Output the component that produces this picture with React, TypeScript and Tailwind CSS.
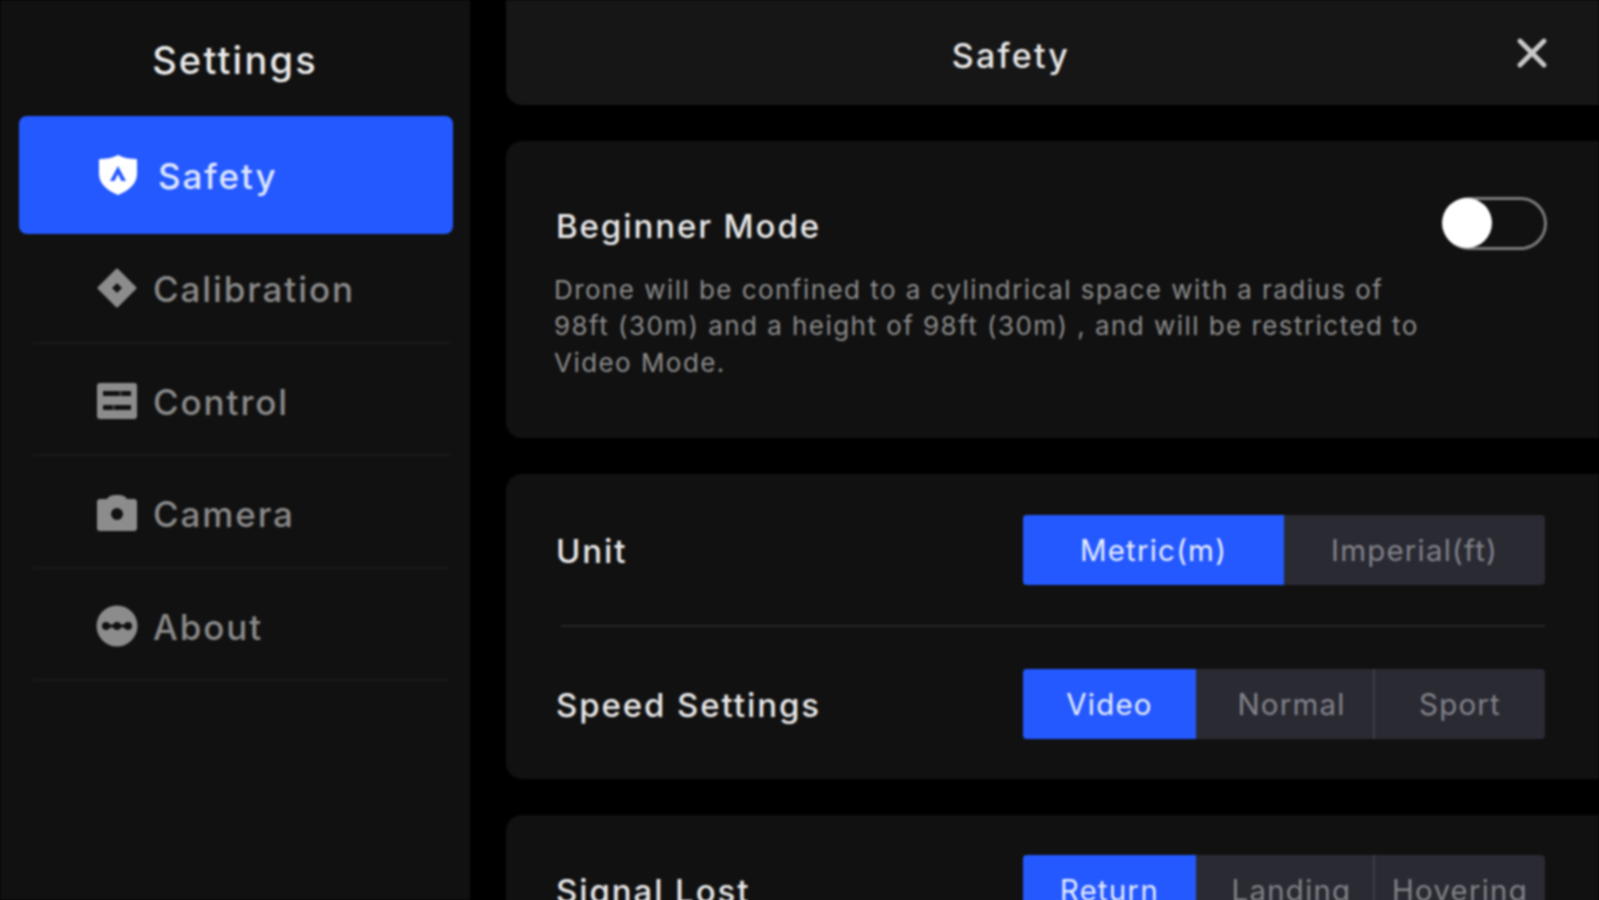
import { ReactNode } from 'react'
import { X } from 'lucide-react'

const ShieldIcon = () => (
  <svg width="40" height="42" viewBox="0 0 40 42" className="shrink-0">
    <path
      fill="#fff"
      fillRule="evenodd"
      d="M20 1 C26 4 32 5 38 5 C39 5 39 6 39 7 L39 20 C39 30 30 37 20 41 C10 37 1 30 1 20 L1 7 C1 6 1 5 2 5 C8 5 14 4 20 1 Z M20 12 L12 27 L16.5 27 L20 20 L23.5 27 L28 27 Z"
    />
  </svg>
)

const DiamondIcon = () => (
  <svg width="42" height="42" viewBox="0 0 42 42" className="shrink-0">
    <path
      fill="#8c8c8c"
      fillRule="evenodd"
      stroke="#8c8c8c"
      strokeWidth="3"
      strokeLinejoin="round"
      d="M21 3 L39 21 L21 39 L3 21 Z M21 14 L14 21 L21 28 L28 21 Z"
    />
  </svg>
)

const ControlIcon = () => (
  <svg width="40" height="36" viewBox="0 0 40 36" className="shrink-0">
    <rect width="40" height="36" rx="3" fill="#8c8c8c" />
    <rect x="6" y="8" width="28" height="5" fill="#111" />
    <rect x="6" y="22" width="28" height="5" fill="#111" />
    <rect x="22" y="7" width="3" height="7" fill="#8c8c8c" opacity="0.3" />
    <rect x="15" y="21" width="3" height="7" fill="#8c8c8c" opacity="0.3" />
  </svg>
)

const CameraIcon = () => (
  <svg width="40" height="36" viewBox="0 0 40 36" className="shrink-0">
    <path
      fill="#8c8c8c"
      fillRule="evenodd"
      d="M3 4 L10 4 C12 1 14 0 20 0 C26 0 28 1 30 4 L37 4 C39 4 40 5 40 7 L40 33 C40 35 39 36 37 36 L3 36 C1 36 0 35 0 33 L0 7 C0 5 1 4 3 4 Z M20 13 A6 6 0 1 0 20 25 A6 6 0 1 0 20 13 Z"
    />
  </svg>
)

const AboutIcon = () => (
  <svg width="42" height="42" viewBox="0 0 42 42" className="shrink-0">
    <circle cx="21" cy="21" r="20.5" fill="#8c8c8c" />
    <circle cx="10" cy="21" r="4" fill="#111" />
    <circle cx="21" cy="21" r="4" fill="#111" />
    <circle cx="32" cy="21" r="4" fill="#111" />
    <rect x="10" y="19.5" width="22" height="3" fill="#111" />
  </svg>
)

const NAV = [
  { label: 'Calibration', icon: <DiamondIcon /> },
  { label: 'Control', icon: <ControlIcon /> },
  { label: 'Camera', icon: <CameraIcon /> },
  { label: 'About', icon: <AboutIcon /> },
]

function Segmented({ options }: { options: { label: string; w: string }[] }) {
  return (
    <div className="flex h-[70px] w-[522px] shrink-0 overflow-hidden rounded-[4px] bg-[#2a2a33] text-[29.5px] tracking-[1.2px]">
      {options.map((o, i) => (
        <div
          key={o.label}
          className={`flex items-center justify-center ${o.w} ${
            i === 0 ? 'bg-[#2459ff] text-[#e8eeff]' : 'text-[#83838a]'
          } ${i === 2 ? 'border-l-2 border-[#3d3d44]' : ''}`}
        >
          {o.label}
        </div>
      ))}
    </div>
  )
}

function Row({ label, children }: { label: string; children: ReactNode }) {
  return (
    <div className="flex items-center justify-between">
      <span className="pt-[3px] text-[33px] font-medium tracking-[1.9px] text-[#e8e8e8]">{label}</span>
      {children}
    </div>
  )
}

export default function App() {
  return (
    <div className="h-screen w-full overflow-hidden bg-black">
      <div
        className="flex h-full w-full bg-black blur-[1px]"
        style={{ fontFamily: 'Inter, "Noto Sans", sans-serif' }}
      >
        {/* Sidebar */}
        <div className="w-[470px] shrink-0 bg-[#111111]">
          <div className="flex h-[116px] items-center justify-center pt-[4px] text-[38px] font-medium tracking-[2.2px] text-[#eaeaea]">
            Settings
          </div>
          <div className="relative -mb-[3px] ml-[19px] mr-[17px] flex h-[118px] items-center gap-[20px] rounded-[8px] bg-[#2459ff] pl-[79px] text-[35px] font-medium tracking-[1.9px] text-[#dfe7ff]">
            <ShieldIcon />
            <span className="pt-[2px]">Safety</span>
          </div>
          {NAV.map((n) => (
            <div
              key={n.label}
              className="ml-[33px] mr-[20px] flex h-[112.5px] items-center border-b-2 border-[#191919] pl-[63px] pt-[4px] text-[35px] font-medium tracking-[1.9px] text-[#8a8a8a]"
            >
              <div className="flex w-[42px] shrink-0 justify-center">{n.icon}</div>
              <span className="ml-[15px] pt-[2px]">{n.label}</span>
            </div>
          ))}
        </div>

        {/* Main */}
        <div className="ml-[36px] flex min-w-0 flex-1 flex-col gap-[36px]">
          <div className="flex h-[105px] shrink-0 items-center rounded-bl-[16px] bg-[#161616]">
            <div className="w-[1010px] pt-[5px] text-center text-[34px] font-medium tracking-[2.2px] text-[#e8e8e8]">Safety</div>
            <X className="-ml-[8px] text-[#c8c8c8]" size={48} strokeWidth={2.4} />
          </div>

          <div className="h-[297px] shrink-0 rounded-l-[16px] bg-[#111111] pl-[50px] pr-[52px] pt-[56px]">
            <div className="flex items-start justify-between">
              <span className="mt-[5px] text-[33px] font-medium tracking-[1.9px] text-[#e8e8e8]">Beginner Mode</span>
              <div className="relative h-[53px] w-[104px] rounded-full border-[3px] border-[#7a7a7a]">
                <div className="absolute -left-[4px] -top-[2px] h-[50px] w-[50px] rounded-full bg-white" />
              </div>
            </div>
            <p className="-ml-[2px] mt-[20px] w-[875px] text-[26px] leading-[36.7px] tracking-[1.45px] text-[#8c8c8c]">
              Drone will be confined to a cylindrical space with a radius of 98ft (30m) and a height of 98ft (30m) , and will be restricted to Video Mode.
            </p>
          </div>

          <div className="h-[305px] shrink-0 rounded-l-[16px] bg-[#111111] pl-[50px] pr-[54px] pt-[41px]">
            <Row label="Unit">
              <Segmented options={[{ label: 'Metric(m)', w: 'w-[261px]' }, { label: 'Imperial(ft)', w: 'w-[261px]' }]} />
            </Row>
            <div className="mb-[42px] ml-[5px] mt-[40px] h-[2px] bg-[#262626]" />
            <Row label="Speed Settings">
              <Segmented options={[{ label: 'Video', w: 'w-[173px]' }, { label: 'Normal', w: 'w-[177px] pl-[14px]' }, { label: 'Sport', w: 'w-[172px]' }]} />
            </Row>
          </div>

          <div className="shrink-0 rounded-l-[16px] bg-[#111111] pb-[40px] pl-[50px] pr-[54px] pt-[40px]">
            <Row label="Signal Lost">
              <Segmented options={[{ label: 'Return', w: 'w-[173px]' }, { label: 'Landing', w: 'w-[177px] pl-[14px]' }, { label: 'Hovering', w: 'w-[172px]' }]} />
            </Row>
          </div>
        </div>
      </div>
    </div>
  )
}
